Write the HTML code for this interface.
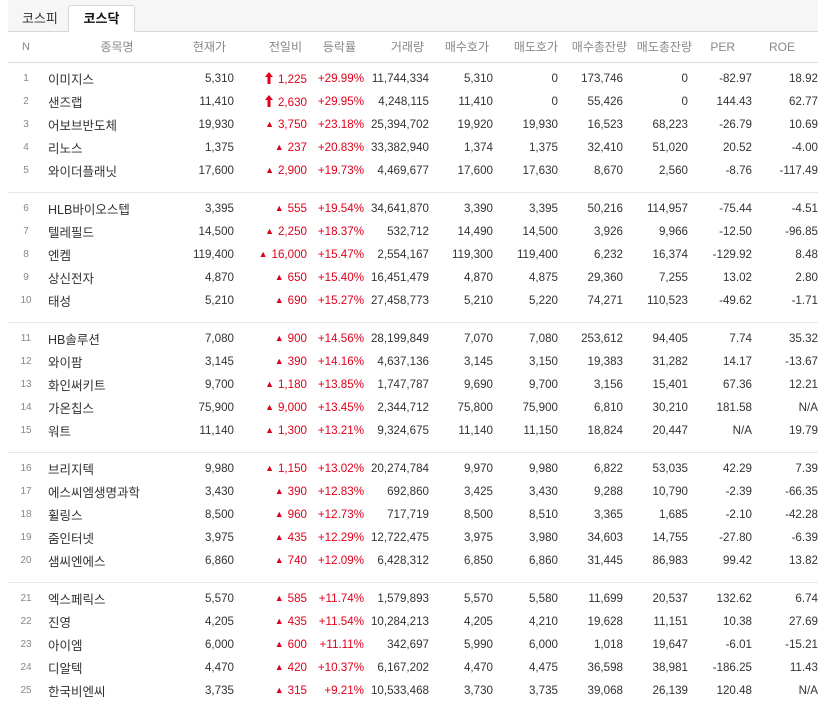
<!DOCTYPE html>
<html><head><meta charset="utf-8"><style>
body{margin:0;background:#fff;width:840px;height:709px;overflow:hidden;position:relative;font-family:"Liberation Sans","Noto Sans CJK KR",sans-serif;font-size:11.6px;color:#333}
.tabbar{position:absolute;left:8px;top:0;width:810px;height:31px;background:#f6f6f6;border-bottom:1px solid #d8d8d8}
.tab{position:absolute;top:8px;font-size:13px;color:#333}
.t2{position:absolute;left:68px;top:5px;width:65px;height:26px;background:#fff;border:1px solid #d8d8d8;border-bottom:none;border-radius:3px 3px 0 0;text-align:center;line-height:26px;font-weight:bold;font-size:13px;color:#111}
table{position:absolute;left:8px;border-collapse:collapse;table-layout:fixed;width:810px}
td{height:23px;padding:0 4px 0 0;text-align:right;white-space:nowrap;overflow:visible}
td.n{text-align:center;font-size:10px;color:#888;padding:0}
td.nm{text-align:left;padding-left:4px;font-size:12.5px}
.r{color:#e0001b}
.hd td{color:#888;height:31px;font-size:12px}
.sep{position:absolute;left:8px;width:810px;height:1px;background:#e8e8e8}
.tri{font-size:9px;margin-right:4px;position:relative;top:-1px}
.up{display:inline-block;vertical-align:-1px;margin-right:5px}
</style></head><body>
<div class="tabbar"></div>
<div class="tab" style="left:22px">코스피</div>
<div class="t2">코스닥</div>
<table style="top:31px">
<colgroup><col style="width:36px"><col style="width:126px"><col style="width:68px"><col style="width:73px"><col style="width:57px"><col style="width:65px"><col style="width:64px"><col style="width:65px"><col style="width:65px"><col style="width:65px"><col style="width:64px"><col style="width:62px"></colgroup>
<tr class="hd" style="border-bottom:1px solid #ddd"><td class="n" style="font-size:11px;color:#888">N</td><td style="text-align:center;padding-left:24px">종목명</td><td style="padding-right:12px">현재가</td><td style="padding-right:9px">전일비</td><td style="padding-right:12px">등락률</td><td style="padding-right:9px">거래량</td><td style="padding-right:8px">매수호가</td><td style="padding-right:4px">매도호가</td><td style="padding-right:0">매수총잔량</td><td style="padding-right:0">매도총잔량</td><td style="padding-right:21px">PER</td><td style="padding-right:23px">ROE</td></tr>
</table>
<table style="top:67px">
<colgroup><col style="width:36px"><col style="width:126px"><col style="width:68px"><col style="width:73px"><col style="width:57px"><col style="width:65px"><col style="width:64px"><col style="width:65px"><col style="width:65px"><col style="width:65px"><col style="width:64px"><col style="width:62px"></colgroup>
<tr><td class="n">1</td><td class="nm">이미지스</td><td>5,310</td><td class="r"><svg class="up" width="8" height="12" viewBox="0 0 8 12"><path d="M4 0L8 5H5.5V12H2.5V5H0Z" fill="#e0001b"/></svg>1,225</td><td class="r">+29.99%</td><td>11,744,334</td><td>5,310</td><td>0</td><td>173,746</td><td>0</td><td>-82.97</td><td style="padding:0">18.92</td></tr>
<tr><td class="n">2</td><td class="nm">샌즈랩</td><td>11,410</td><td class="r"><svg class="up" width="8" height="12" viewBox="0 0 8 12"><path d="M4 0L8 5H5.5V12H2.5V5H0Z" fill="#e0001b"/></svg>2,630</td><td class="r">+29.95%</td><td>4,248,115</td><td>11,410</td><td>0</td><td>55,426</td><td>0</td><td>144.43</td><td style="padding:0">62.77</td></tr>
<tr><td class="n">3</td><td class="nm">어보브반도체</td><td>19,930</td><td class="r"><span class="tri">▲</span>3,750</td><td class="r">+23.18%</td><td>25,394,702</td><td>19,920</td><td>19,930</td><td>16,523</td><td>68,223</td><td>-26.79</td><td style="padding:0">10.69</td></tr>
<tr><td class="n">4</td><td class="nm">리노스</td><td>1,375</td><td class="r"><span class="tri">▲</span>237</td><td class="r">+20.83%</td><td>33,382,940</td><td>1,374</td><td>1,375</td><td>32,410</td><td>51,020</td><td>20.52</td><td style="padding:0">-4.00</td></tr>
<tr><td class="n">5</td><td class="nm">와이더플래닛</td><td>17,600</td><td class="r"><span class="tri">▲</span>2,900</td><td class="r">+19.73%</td><td>4,469,677</td><td>17,600</td><td>17,630</td><td>8,670</td><td>2,560</td><td>-8.76</td><td style="padding:0">-117.49</td></tr>
</table>
<div class="sep" style="top:192px"></div>
<table style="top:197px">
<colgroup><col style="width:36px"><col style="width:126px"><col style="width:68px"><col style="width:73px"><col style="width:57px"><col style="width:65px"><col style="width:64px"><col style="width:65px"><col style="width:65px"><col style="width:65px"><col style="width:64px"><col style="width:62px"></colgroup>
<tr><td class="n">6</td><td class="nm">HLB바이오스텝</td><td>3,395</td><td class="r"><span class="tri">▲</span>555</td><td class="r">+19.54%</td><td>34,641,870</td><td>3,390</td><td>3,395</td><td>50,216</td><td>114,957</td><td>-75.44</td><td style="padding:0">-4.51</td></tr>
<tr><td class="n">7</td><td class="nm">텔레필드</td><td>14,500</td><td class="r"><span class="tri">▲</span>2,250</td><td class="r">+18.37%</td><td>532,712</td><td>14,490</td><td>14,500</td><td>3,926</td><td>9,966</td><td>-12.50</td><td style="padding:0">-96.85</td></tr>
<tr><td class="n">8</td><td class="nm">엔켐</td><td>119,400</td><td class="r"><span class="tri">▲</span>16,000</td><td class="r">+15.47%</td><td>2,554,167</td><td>119,300</td><td>119,400</td><td>6,232</td><td>16,374</td><td>-129.92</td><td style="padding:0">8.48</td></tr>
<tr><td class="n">9</td><td class="nm">상신전자</td><td>4,870</td><td class="r"><span class="tri">▲</span>650</td><td class="r">+15.40%</td><td>16,451,479</td><td>4,870</td><td>4,875</td><td>29,360</td><td>7,255</td><td>13.02</td><td style="padding:0">2.80</td></tr>
<tr><td class="n">10</td><td class="nm">태성</td><td>5,210</td><td class="r"><span class="tri">▲</span>690</td><td class="r">+15.27%</td><td>27,458,773</td><td>5,210</td><td>5,220</td><td>74,271</td><td>110,523</td><td>-49.62</td><td style="padding:0">-1.71</td></tr>
</table>
<div class="sep" style="top:322px"></div>
<table style="top:327px">
<colgroup><col style="width:36px"><col style="width:126px"><col style="width:68px"><col style="width:73px"><col style="width:57px"><col style="width:65px"><col style="width:64px"><col style="width:65px"><col style="width:65px"><col style="width:65px"><col style="width:64px"><col style="width:62px"></colgroup>
<tr><td class="n">11</td><td class="nm">HB솔루션</td><td>7,080</td><td class="r"><span class="tri">▲</span>900</td><td class="r">+14.56%</td><td>28,199,849</td><td>7,070</td><td>7,080</td><td>253,612</td><td>94,405</td><td>7.74</td><td style="padding:0">35.32</td></tr>
<tr><td class="n">12</td><td class="nm">와이팜</td><td>3,145</td><td class="r"><span class="tri">▲</span>390</td><td class="r">+14.16%</td><td>4,637,136</td><td>3,145</td><td>3,150</td><td>19,383</td><td>31,282</td><td>14.17</td><td style="padding:0">-13.67</td></tr>
<tr><td class="n">13</td><td class="nm">화인써키트</td><td>9,700</td><td class="r"><span class="tri">▲</span>1,180</td><td class="r">+13.85%</td><td>1,747,787</td><td>9,690</td><td>9,700</td><td>3,156</td><td>15,401</td><td>67.36</td><td style="padding:0">12.21</td></tr>
<tr><td class="n">14</td><td class="nm">가온칩스</td><td>75,900</td><td class="r"><span class="tri">▲</span>9,000</td><td class="r">+13.45%</td><td>2,344,712</td><td>75,800</td><td>75,900</td><td>6,810</td><td>30,210</td><td>181.58</td><td style="padding:0">N/A</td></tr>
<tr><td class="n">15</td><td class="nm">워트</td><td>11,140</td><td class="r"><span class="tri">▲</span>1,300</td><td class="r">+13.21%</td><td>9,324,675</td><td>11,140</td><td>11,150</td><td>18,824</td><td>20,447</td><td>N/A</td><td style="padding:0">19.79</td></tr>
</table>
<div class="sep" style="top:452px"></div>
<table style="top:457px">
<colgroup><col style="width:36px"><col style="width:126px"><col style="width:68px"><col style="width:73px"><col style="width:57px"><col style="width:65px"><col style="width:64px"><col style="width:65px"><col style="width:65px"><col style="width:65px"><col style="width:64px"><col style="width:62px"></colgroup>
<tr><td class="n">16</td><td class="nm">브리지텍</td><td>9,980</td><td class="r"><span class="tri">▲</span>1,150</td><td class="r">+13.02%</td><td>20,274,784</td><td>9,970</td><td>9,980</td><td>6,822</td><td>53,035</td><td>42.29</td><td style="padding:0">7.39</td></tr>
<tr><td class="n">17</td><td class="nm">에스씨엠생명과학</td><td>3,430</td><td class="r"><span class="tri">▲</span>390</td><td class="r">+12.83%</td><td>692,860</td><td>3,425</td><td>3,430</td><td>9,288</td><td>10,790</td><td>-2.39</td><td style="padding:0">-66.35</td></tr>
<tr><td class="n">18</td><td class="nm">휠링스</td><td>8,500</td><td class="r"><span class="tri">▲</span>960</td><td class="r">+12.73%</td><td>717,719</td><td>8,500</td><td>8,510</td><td>3,365</td><td>1,685</td><td>-2.10</td><td style="padding:0">-42.28</td></tr>
<tr><td class="n">19</td><td class="nm">줌인터넷</td><td>3,975</td><td class="r"><span class="tri">▲</span>435</td><td class="r">+12.29%</td><td>12,722,475</td><td>3,975</td><td>3,980</td><td>34,603</td><td>14,755</td><td>-27.80</td><td style="padding:0">-6.39</td></tr>
<tr><td class="n">20</td><td class="nm">샘씨엔에스</td><td>6,860</td><td class="r"><span class="tri">▲</span>740</td><td class="r">+12.09%</td><td>6,428,312</td><td>6,850</td><td>6,860</td><td>31,445</td><td>86,983</td><td>99.42</td><td style="padding:0">13.82</td></tr>
</table>
<div class="sep" style="top:582px"></div>
<table style="top:587px">
<colgroup><col style="width:36px"><col style="width:126px"><col style="width:68px"><col style="width:73px"><col style="width:57px"><col style="width:65px"><col style="width:64px"><col style="width:65px"><col style="width:65px"><col style="width:65px"><col style="width:64px"><col style="width:62px"></colgroup>
<tr><td class="n">21</td><td class="nm">엑스페릭스</td><td>5,570</td><td class="r"><span class="tri">▲</span>585</td><td class="r">+11.74%</td><td>1,579,893</td><td>5,570</td><td>5,580</td><td>11,699</td><td>20,537</td><td>132.62</td><td style="padding:0">6.74</td></tr>
<tr><td class="n">22</td><td class="nm">진영</td><td>4,205</td><td class="r"><span class="tri">▲</span>435</td><td class="r">+11.54%</td><td>10,284,213</td><td>4,205</td><td>4,210</td><td>19,628</td><td>11,151</td><td>10.38</td><td style="padding:0">27.69</td></tr>
<tr><td class="n">23</td><td class="nm">아이엠</td><td>6,000</td><td class="r"><span class="tri">▲</span>600</td><td class="r">+11.11%</td><td>342,697</td><td>5,990</td><td>6,000</td><td>1,018</td><td>19,647</td><td>-6.01</td><td style="padding:0">-15.21</td></tr>
<tr><td class="n">24</td><td class="nm">디알텍</td><td>4,470</td><td class="r"><span class="tri">▲</span>420</td><td class="r">+10.37%</td><td>6,167,202</td><td>4,470</td><td>4,475</td><td>36,598</td><td>38,981</td><td>-186.25</td><td style="padding:0">11.43</td></tr>
<tr><td class="n">25</td><td class="nm">한국비엔씨</td><td>3,735</td><td class="r"><span class="tri">▲</span>315</td><td class="r">+9.21%</td><td>10,533,468</td><td>3,730</td><td>3,735</td><td>39,068</td><td>26,139</td><td>120.48</td><td style="padding:0">N/A</td></tr>
</table>
</body></html>
